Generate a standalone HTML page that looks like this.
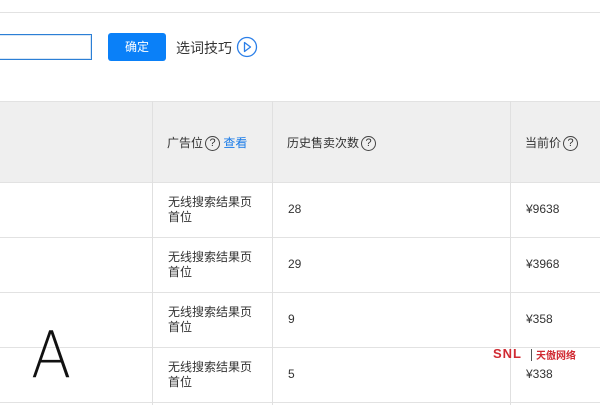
<!DOCTYPE html>
<html><head><meta charset="utf-8"><style>
*{margin:0;padding:0;box-sizing:border-box}
body{width:600px;height:405px;overflow:hidden;background:#fff;position:relative;font-family:"Liberation Sans","Noto Sans CJK SC",sans-serif;color:#333}
.a{position:absolute}
.hl{position:absolute;left:0;width:600px;height:1px;background:#e2e2e2}
.vl{position:absolute;top:101px;width:1px;height:304px;background:#e0e0e0}
.t{position:absolute;font-size:12px;white-space:nowrap}
.q{display:inline-block;width:15px;height:15px;border:1px solid #444;border-radius:50%;font-size:11px;line-height:13px;text-align:center;vertical-align:middle;margin-left:2px}
</style></head><body>
<div class="hl" style="top:12px"></div>
<div class="a" style="left:-2px;top:34px;width:94px;height:26px;border:1px solid #2b7fd6;box-shadow:inset 0 0 0 1px #d8e6f5"></div>
<div class="a" style="left:108px;top:33px;width:58px;height:28px;background:#0a80f8;border-radius:3px;color:#fff;font-size:12px;text-align:center;line-height:28px">确定</div>
<div class="t" style="left:176px;top:38px;font-size:14px">选词技巧</div>
<svg class="a" style="left:236px;top:36px" width="22" height="22"><circle cx="11" cy="11" r="9.5" fill="none" stroke="#2b7fe8" stroke-width="1.3"/><path d="M8.5 6.5 L14.5 11 L8.5 15.5Z" fill="none" stroke="#2b7fe8" stroke-width="1.3" stroke-linejoin="round"/></svg>
<div class="a" style="left:0;top:101px;width:600px;height:81px;background:#efefef"></div>
<div class="hl" style="top:101px"></div>
<div class="hl" style="top:182px"></div>
<div class="hl" style="top:237px"></div>
<div class="hl" style="top:292px"></div>
<div class="hl" style="top:347px"></div>
<div class="hl" style="top:402px"></div>
<div class="vl" style="left:152px"></div>
<div class="vl" style="left:272px"></div>
<div class="vl" style="left:510px"></div>
<div class="t" style="left:167px;top:134px">广告位<span class="q">?</span> <span style="color:#1a7be8">查看</span></div>
<div class="t" style="left:287px;top:134px">历史售卖次数<span class="q">?</span></div>
<div class="t" style="left:525px;top:134px">当前价<span class="q">?</span></div>
<div class="t" style="left:168px;top:195px;line-height:15px">无线搜索结果页<br>首位</div>
<div class="t" style="left:168px;top:250px;line-height:15px">无线搜索结果页<br>首位</div>
<div class="t" style="left:168px;top:305px;line-height:15px">无线搜索结果页<br>首位</div>
<div class="t" style="left:168px;top:360px;line-height:15px">无线搜索结果页<br>首位</div>
<div class="t" style="left:288px;top:202px">28</div>
<div class="t" style="left:288px;top:257px">29</div>
<div class="t" style="left:288px;top:312px">9</div>
<div class="t" style="left:288px;top:367px">5</div>
<div class="t" style="left:526px;top:202px">¥9638</div>
<div class="t" style="left:526px;top:257px">¥3968</div>
<div class="t" style="left:526px;top:312px">¥358</div>
<div class="t" style="left:526px;top:367px">¥338</div>
<div class="t" style="left:31px;top:320px;font-size:64px;font-family:'DejaVu Sans',sans-serif;font-weight:200;color:#111;transform:scaleX(0.92);transform-origin:left;line-height:72px">A</div>
<div class="t" style="left:493px;top:346px;font-size:13px;font-weight:bold;color:#d02a32;letter-spacing:1px">SNL</div>
<div class="a" style="left:531px;top:349px;width:1px;height:12px;background:#555"></div>
<div class="t" style="left:536px;top:347px;font-size:10px;font-weight:bold;color:#d02a32">天傲网络</div>
</body></html>
